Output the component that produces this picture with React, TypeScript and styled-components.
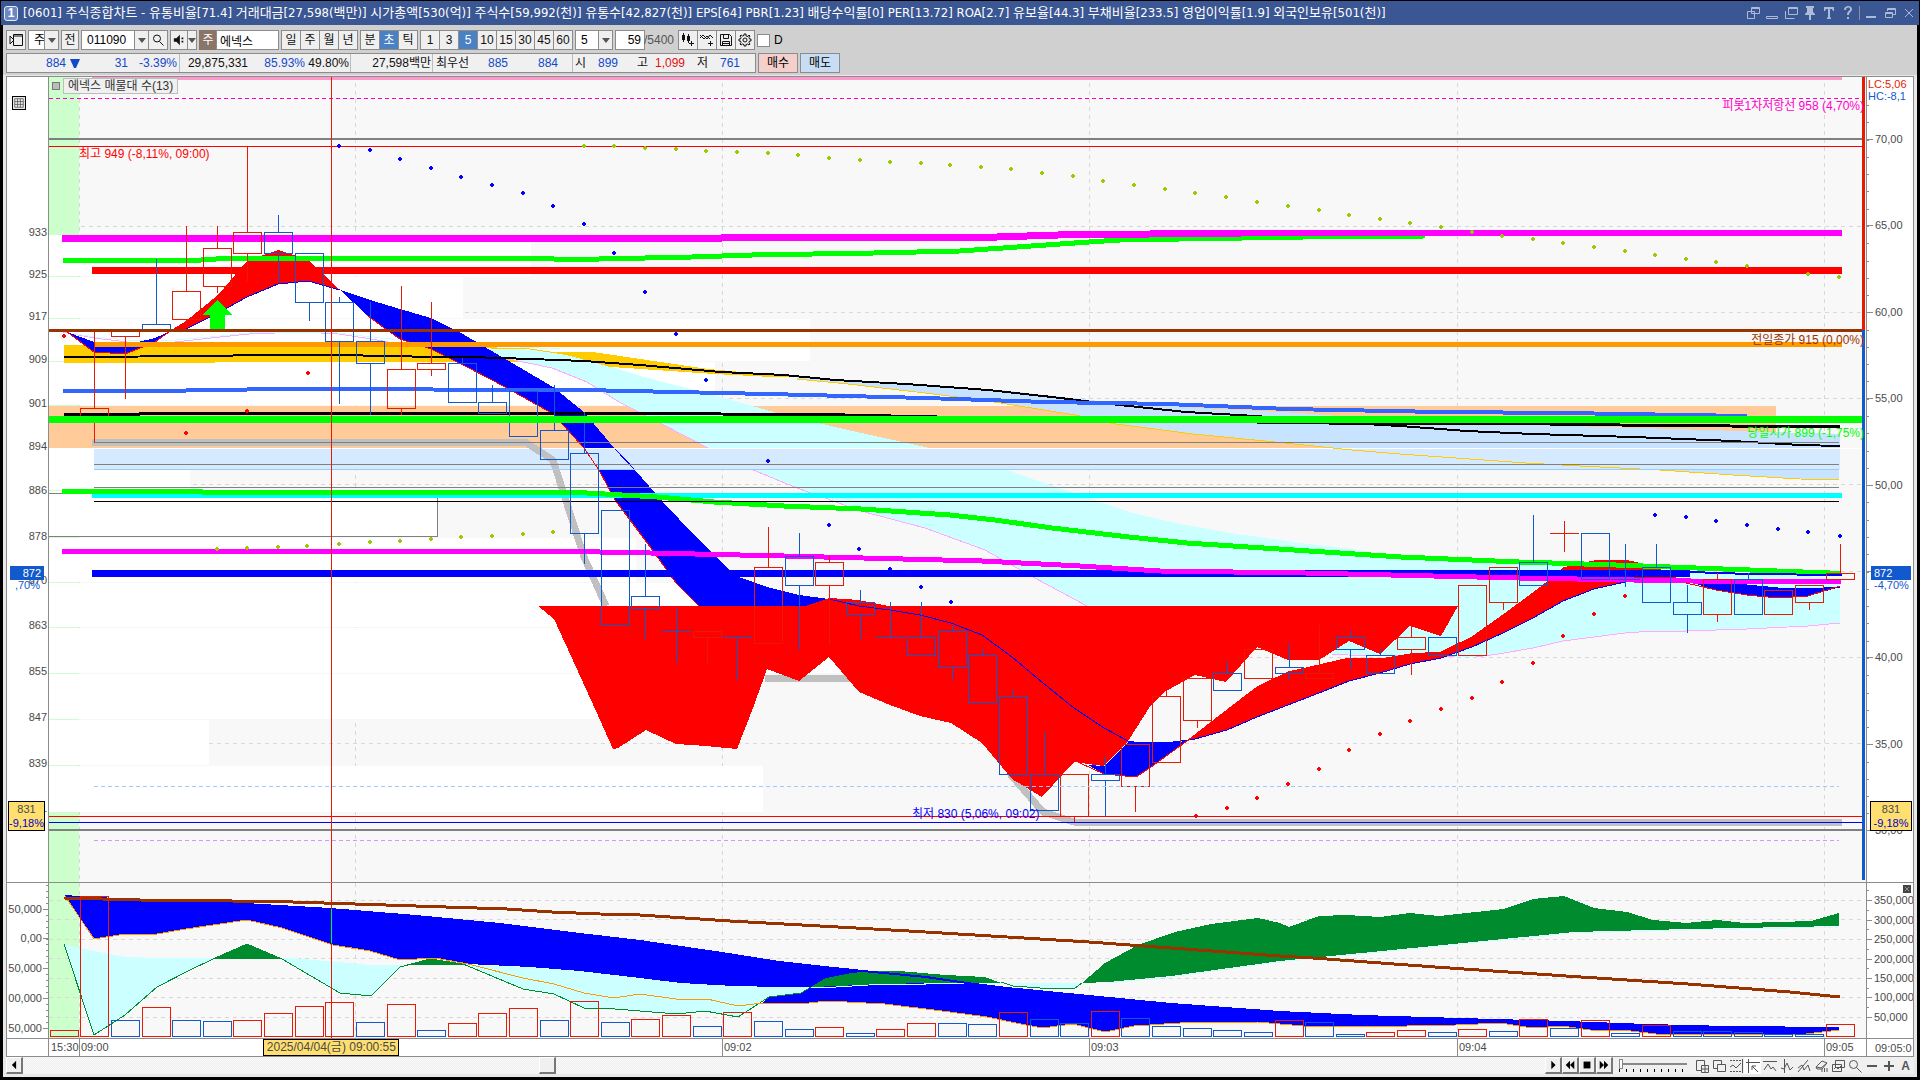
import React from "react";
import styled, { createGlobalStyle, css } from "styled-components";

const KR = `"Liberation Sans", "Noto Sans CJK KR", sans-serif`;
const KR_WIDE = `"DejaVu Sans Condensed", "Noto Sans CJK KR", sans-serif`;

const Global = createGlobalStyle`
  * { box-sizing: border-box; }
  html, body { margin: 0; background: #000; }
  body { font: 12px/14px ${KR}; color: #000; }
  button, input, select { font: inherit; color: inherit; margin: 0; padding: 0; border-radius: 0; }
`;

/* ---------- window ---------- */
const Window = styled.div`
  display: flex;
  flex-direction: column;
  height: 100vh;
  min-height: 640px;
  padding: 1px 1px 3px;
  background: #000;
`;
const TitleBar = styled.header`
  display: flex;
  align-items: center;
  height: 24px;
  flex: none;
  padding: 0 2px 0 3px;
  gap: 5px;
  background: #3a5693;
  color: #fff;
`;
const Badge = styled.span`
  width: 14px;
  height: 15px;
  border: 1px solid #e6ecf8;
  border-radius: 3px;
  background: #6c88c0;
  font-weight: bold;
  line-height: 13px;
  text-align: center;
`;
const Title = styled.h1`
  margin: 0;
  flex: 1;
  font: 13px/20px ${KR_WIDE};
  white-space: pre;
  overflow: hidden;
`;
const TitleTools = styled.div`
  display: flex;
  align-items: center;
  gap: 3px;
  color: #aebbd8;
`;
const TitleButton = styled.button`
  display: grid;
  place-items: center;
  width: 16px;
  height: 20px;
  border: 0;
  background: none;
`;
const TitleRule = styled.i`
  width: 1px;
  height: 14px;
  background: #8a8f9c;
`;
const Body = styled.main`
  display: flex;
  flex-direction: column;
  flex: 1;
  min-height: 0;
  margin: 0 2px;
  background: #e8e8e8;
`;

/* ---------- tool bar ---------- */
const ToolArea = styled.div`
  display: flex;
  flex-direction: column;
  gap: 3px;
  flex: none;
  height: 50px;
  padding: 5px 3px 2px;
  background: #d0d0d0;
`;
const Row = styled.div`
  display: flex;
  height: 20px;
  gap: 2px;
  white-space: nowrap;
`;
const Joined = styled.div`
  display: flex;
  & > * + * { margin-left: -1px; }
`;
const cell = css`
  display: grid;
  place-items: center;
  height: 20px;
  border: 1px solid #8c8c8c;
`;
const ToolButton = styled.button<{ $w?: number; $on?: boolean }>`
  ${cell}
  width: ${(p) => p.$w ?? 20}px;
  background: ${(p) => (p.$on ? "#4a80c4" : "#efefef")};
  color: ${(p) => (p.$on ? "#fff" : "#111")};
`;
const Field = styled.input<{ $w: number; $align?: string }>`
  width: ${(p) => p.$w}px;
  height: 20px;
  padding: 0 3px;
  border: 1px solid #8c8c8c;
  background: #fff;
  text-align: ${(p) => p.$align ?? "left"};
`;
const Pick = styled.select<{ $w: number }>`
  width: ${(p) => p.$w}px;
  height: 20px;
  padding: 0 0 0 5px;
  border: 1px solid #8c8c8c;
  appearance: none;
  background: #fff;
`;
const PickWrap = styled.label`
  position: relative;
  display: block;
  &::after {
    content: "";
    position: absolute;
    right: 1px;
    top: 1px;
    width: 13px;
    height: 18px;
    border-left: 1px solid #8c8c8c;
    background: #efefef;
    pointer-events: none;
  }
  & > svg {
    position: absolute;
    z-index: 1;
    right: 3px;
    top: 8px;
    pointer-events: none;
  }
`;
const StockTag = styled.span`
  display: grid;
  place-items: center;
  width: 18px;
  height: 20px;
  background: #8b7468;
  color: #fff;
`;
const Count = styled.span`
  display: flex;
  align-items: center;
  width: 32px;
  color: #555;
`;
const Check = styled.label`
  display: flex;
  align-items: center;
  gap: 4px;
`;
const CheckBox = styled.input`
  appearance: none;
  width: 13px;
  height: 13px;
  border: 1px solid #8c8c8c;
  background: #fff;
`;
const Quote = styled.div`
  display: flex;
  width: 750px;
  border: 1px solid #8c8c8c;
  background: #f0f0f0;
`;
const QuoteCell = styled.div<{ $w: number }>`
  display: flex;
  align-items: center;
  width: ${(p) => p.$w}px;
  & + & { border-left: 1px solid #bdbdbd; }
`;
const Num = styled.span<{ $w: number; $c?: string }>`
  width: ${(p) => p.$w}px;
  color: ${(p) => p.$c ?? "#111"};
  text-align: right;
`;
const DownMark = styled.span`
  display: grid;
  place-items: center;
  width: 18px;
  color: #1149cc;
`;
const Trade = styled.button<{ $bg: string }>`
  ${cell}
  width: 40px;
  background: ${(p) => p.$bg};
`;

/* ---------- chart ---------- */
const Frame = styled.section`
  display: flex;
  flex-direction: column;
  flex: 1;
  min-height: 0;
  margin: 1px 3px 0;
  border: 1px solid #8c8c8c;
  background: #fff;
`;
const Panel = styled.div<{ $grow?: number; $h?: number }>`
  display: grid;
  grid-template-columns: 41px minmax(0, 1fr) 47px;
  grid-template-rows: minmax(0, 1fr);
  flex: ${(p) => (p.$grow ? `${p.$grow} 1 0` : `0 0 ${p.$h}px`)};
  min-height: 0;
  & + & { border-top: 1px solid #8c8c8c; }
`;
const Axis = styled.div<{ $right?: boolean }>`
  position: relative;
  overflow: hidden;
  color: #4a4a4a;
  font-size: 11px;
  ${(p) => p.$right && "border-left: 1px solid #8c8c8c;"}
`;
const Plot = styled.div<{ $bg?: string }>`
  position: relative;
  display: grid;
  grid-template-rows: minmax(0, 1fr);
  min-height: 0;
  overflow: hidden;
  border-left: 1px solid #8c8c8c;
  background: ${(p) => p.$bg ?? "#f8f8f8"};
`;
const Drawing = styled.svg`
  display: block;
  width: 100%;
  height: 100%;
  min-height: 0;
`;
type At = { $y: number; $left?: string; $right?: string; $c?: string };
const Mark = styled.span<At>`
  position: absolute;
  top: ${(p) => p.$y}%;
  ${(p) => p.$left && `left: ${p.$left};`}
  ${(p) => p.$right && `right: ${p.$right};`}
  color: ${(p) => p.$c ?? "inherit"};
  white-space: pre;
  transform: translateY(-50%);
`;
const Tick = styled.i<{ $y: number; $w: number; $side: string }>`
  position: absolute;
  top: ${(p) => p.$y}%;
  ${(p) => p.$side}: 0;
  width: ${(p) => p.$w}px;
  height: 1px;
  background: #8c8c8c;
`;
const PriceTag = styled(Mark)<{ $w: number; $end?: boolean }>`
  width: ${(p) => p.$w}px;
  padding: 0 3px;
  background: #1159cc;
  color: #fff;
  text-align: ${(p) => (p.$end ? "right" : "left")};
`;
const CursorTag = styled(Mark)<{ $w: number }>`
  width: ${(p) => p.$w}px;
  border: 1px solid #000;
  background: #ffdf6f;
  text-align: center;
  & b { display: block; font-weight: normal; color: #0000c8; }
`;
const Legend = styled.div`
  position: absolute;
  top: 1px;
  left: 3px;
  display: flex;
  align-items: center;
  gap: 3px;
  color: #333;
  &::before {
    content: "";
    width: 6px;
    height: 6px;
    border: 1px solid #777;
    background: #bbb;
  }
  & span {
    padding: 0 4px;
    border: 1px solid #bdbdbd;
    background: #f0f0f0;
  }
`;
const GridButton = styled.button`
  position: absolute;
  top: 19px;
  left: 5px;
  display: grid;
  place-items: center;
  width: 14px;
  height: 14px;
  border: 1px solid #000;
  background: #e8e8e8;
`;
const ClosePanel = styled.button`
  position: absolute;
  top: 2px;
  right: 2px;
  display: grid;
  place-items: center;
  width: 8px;
  height: 8px;
  border: 0;
  background: #444;
  color: #fff;
`;
const TimeMark = styled.span<{ $x: number; $rule?: boolean }>`
  position: absolute;
  top: 0;
  left: ${(p) => p.$x}%;
  height: 17px;
  padding-left: 1px;
  font-size: 11px;
  line-height: 17px;
  color: #4a4a4a;
  ${(p) => p.$rule && "border-left: 1px solid #8c8c8c;"}
`;
const DateTag = styled.span`
  position: absolute;
  top: 0;
  left: 11.8%;
  width: 136px;
  height: 17px;
  border: 1px solid #000;
  background: #ffdf6f;
  color: #4a4a4a;
  line-height: 15px;
  text-align: center;
  white-space: nowrap;
`;

/* ---------- bottom bar ---------- */
const Footer = styled.footer`
  display: flex;
  flex: none;
  height: 17px;
  margin: 0 3px 3px;
`;
const Bevel = styled.button`
  display: grid;
  place-items: center;
  width: 17px;
  height: 17px;
  flex: none;
  border: 1px solid #fff;
  border-right: 2px solid #777;
  border-bottom: 2px solid #777;
  background: #f0f0f0;
`;
const Track = styled.div`
  display: flex;
  flex: 1;
  background: repeating-conic-gradient(#eeeeee 0 25%, #fbfbfb 0 50%) 0 0 / 2px 2px;
`;
const ThumbGap = styled.div`
  flex: 0 0 33.9%;
`;
const Zoomer = styled.label`
  display: grid;
  align-content: start;
  width: 80px;
  padding: 2px 6px 0;
  background: #f0f0f0;
`;
const Range = styled.input`
  appearance: none;
  width: 68px;
  height: 10px;
  background: linear-gradient(#888, #888) 0 4px / 100% 2px no-repeat;
  &::-webkit-slider-thumb {
    appearance: none;
    width: 4px;
    height: 10px;
    border: 1px solid #888;
    background: #fff;
  }
`;
const Notches = styled.i`
  height: 3px;
  background: repeating-linear-gradient(90deg, #000 0 1px, transparent 1px 7px);
`;
const FootTools = styled.div`
  display: flex;
  width: 221px;
  background: #f0f0f0;
`;
const FootButton = styled.button<{ $on?: boolean }>`
  display: grid;
  place-items: center;
  width: 17px;
  height: 17px;
  border: 0;
  background: ${(p) => (p.$on ? "#fff" : "none")};
  color: #555;
`;

/* ---------- data ---------- */
const RED = "#e61a05";
const BLUE = "#1159cc";
const cx = (i: number) => Math.round(63.7 + 30.62 * i);

// [colour, high, body top, body bottom, low], oldest first, as plot heights
type Candle = [string, number, number, number, number];
const r = RED;
const b = BLUE;
const candles: Candle[] = [
  [r, 332, 408, 419, 442], [r, 330, 331, 336, 398], [b, 259, 324, 330, 330], [r, 226, 291, 319, 325],
  [r, 226, 248, 286, 292], [r, 147, 232, 253, 281], [b, 215, 232, 253, 281], [b, 253, 253, 302, 320],
  [b, 297, 302, 341, 403], [b, 302, 341, 363, 414], [r, 286, 369, 408, 414], [r, 302, 363, 369, 375],
  [b, 358, 363, 402, 402], [b, 385, 402, 413, 413], [b, 391, 391, 436, 436], [b, 385, 430, 459, 459],
  [b, 412, 453, 533, 563], [b, 510, 510, 625, 625], [b, 544, 596, 608, 638], [b, 608, 631, 631, 662],
  [r, 631, 631, 637, 662], [b, 637, 637, 637, 679], [r, 527, 567, 643, 643], [b, 533, 556, 585, 649],
  [r, 556, 562, 585, 644], [b, 590, 602, 614, 638], [b, 602, 637, 637, 637], [b, 602, 637, 655, 655],
  [b, 625, 631, 667, 679], [b, 649, 655, 702, 702], [b, 690, 696, 774, 774], [b, 732, 774, 810, 810],
  [r, 774, 774, 816, 822], [b, 756, 774, 780, 816], [r, 744, 744, 786, 811], [r, 691, 696, 762, 762],
  [r, 678, 678, 720, 727], [b, 661, 673, 690, 690], [r, 649, 649, 678, 678], [b, 643, 667, 673, 679],
  [r, 625, 673, 678, 678], [b, 631, 637, 649, 668], [b, 649, 655, 673, 673], [r, 626, 637, 649, 674],
  [b, 637, 637, 655, 655], [r, 585, 585, 655, 655], [r, 567, 567, 602, 609], [b, 515, 562, 585, 585],
  [r, 521, 533, 533, 551], [b, 533, 533, 579, 579], [b, 544, 579, 579, 586], [b, 544, 567, 602, 602],
  [b, 585, 602, 614, 632], [r, 573, 579, 614, 621], [b, 573, 579, 614, 614], [r, 590, 590, 614, 614],
  [r, 585, 585, 602, 609], [r, 544, 573, 579, 579],
];

const volumes: [string, number][] = [
  [r, 1030], [r, 896], [b, 1020], [r, 1007], [b, 1020], [b, 1021], [r, 1020], [r, 1013], [r, 1006], [r, 1002],
  [b, 1022], [r, 1004], [b, 1030], [r, 1023], [r, 1013], [r, 1008], [b, 1020], [r, 1001], [b, 1022], [r, 1019],
  [r, 1015], [b, 1026], [r, 1012], [b, 1021], [b, 1029], [r, 1027], [b, 1033], [r, 1029], [r, 1023], [b, 1023],
  [b, 1024], [r, 1012], [b, 1019], [b, 1023], [r, 1011], [b, 1018], [b, 1026], [b, 1028], [b, 1030], [b, 1032],
  [r, 1020], [b, 1022], [b, 1034], [r, 1032], [r, 1030], [b, 1032], [r, 1029], [b, 1031], [r, 1019], [b, 1028],
  [r, 1020], [b, 1033], [r, 1025], [b, 1031], [b, 1031], [b, 1032], [b, 1034], [b, 1034], [r, 1024],
];

const dots: [string, string][] = [
  ["#0000ff", "339,146 370,150 400,159 431,168 461,177 492,185 523,193 553,206 584,224 614,253 645,292 676,334 706,380 768,461 829,525 859,549 890,569 921,587 951,602 1655,515 1686,517 1716,521 1747,525 1778,529 1808,532 1840,536"],
  ["#99cc00", "584,146 614,146 645,148 676,149 706,151 737,152 768,153 798,155 829,158 860,160 890,162 921,163 950,165 981,167 1011,169 1042,173 1073,176 1103,181 1134,185 1165,189 1195,193 1226,197 1257,202 1288,206 1319,210 1349,215 1380,219 1410,223 1441,227 1472,232 1502,236 1533,239 1563,243 1594,247 1625,251 1655,255 1686,259 1716,262 1747,266 1808,274 1839,277 217,549 247,548 278,547 307,546 339,544 370,542 400,541 431,539 461,537 492,536 523,534 553,532"],
  ["#ff0000", "64,336 308,373 247,411 186,433 1196,816 1227,808 1257,798 1288,784 1319,769 1349,750 1380,734 1410,721 1441,709 1472,698 1502,682 1533,663 1563,636 1594,614 1625,596"],
];

// white bars of the price/volume profile: top, height, right end
const profile: [number, number, number][] = [
  [235, 41, 531], [277, 41, 463], [319, 42, 810], [362, 43, 715], [449, 41, 190], [491, 46, 437],
  [538, 44, 636], [583, 44, 700], [628, 45, 848], [674, 45, 700], [720, 45, 209], [766, 46, 763],
];

const YELLOW = "797,379 848,384 925,393 982,400 1075,415 1116,424 1193,434 1275,442 1352,450 1400,454 1526,463 1580,466 1660,470 1733,475 1800,479 1839,480";
const PINK_R = "1332,654 1348,655 1455,657 1476,657 1498,654 1533,648 1563,641 1594,637 1625,633 1653,631 1686,631 1747,629 1808,626 1840,623";
const PINK_L = "63,332 94,338 127,342 175,342 220,337 249,334 302,332 339,334 371,339 400,344 440,349 504,358 552,368 587,382 619,402 660,423 708,448 746,467 797,488 861,511 925,528 985,550 1033,577 1087,606";
const SLOW_MA = "829,599 859,606 890,610 920,615 951,623 982,635 1012,657 1043,683 1074,708 1104,728 1128,741 1134,742 1166,743 1195,739 1227,730 1257,717 1288,705 1319,693 1349,681 1380,673 1410,664 1441,658 1472,647 1503,633 1533,618 1563,601 1594,589 1625,582 1653,579 1686,581 1716,583 1747,585 1778,588 1808,589 1840,587";
const FAST_MA = "1080,763 1104,774 1136,777 1151,767 1180,746 1187,741 1227,710 1257,687 1288,672 1319,665 1349,658 1380,659 1410,654 1441,652 1472,637 1503,615 1533,593 1551,579 1563,568 1594,561 1625,560 1655,567 1686,583 1716,590 1747,595 1778,598 1808,596 1840,586";
const VOL_SLOW = "65,896 94,898 170,901 245,904 330,909 416,916 500,924 580,934 640,941 722,953 779,962 824,967 873,972 926,977 967,983 1007,988 1089,996 1171,1004 1280,1012 1362,1016 1460,1019 1566,1022 1647,1025 1729,1027 1839,1028";
const VOL_FAST = "762,1003 799,1004 828,1001 885,1004 942,1011 987,1017 1016,1023 1042,1028 1073,1024 1105,1032 1134,1026 1195,1022 1224,1023 1258,1022 1280,1024 1304,1026 1378,1027 1407,1026 1456,1025 1500,1023 1533,1028 1562,1026 1590,1030 1631,1031 1656,1034 1688,1035 1762,1034 1806,1034 1839,1030";
const VOL_GREEN = "64,944 94,1035 125,1015 157,987 190,970 213,959 247,944 282,959 340,993 371,996 400,967 430,959 463,964 523,989 554,994 584,1008 615,1009 640,1011 677,1014 705,1011 738,1017 769,997 801,993 811,987";

const rev = (s: string) => s.split(" ").reverse().join(" ");

type LineProps = { p: string; c: string; w?: number; dash?: string };
const Line = ({ p, c, w = 1, dash }: LineProps) => (
  <polyline points={p} fill="none" stroke={c} strokeWidth={w} strokeDasharray={dash} strokeLinejoin="round" />
);
type LevelProps = { y: number; c: string; w?: number; x1?: number; x2?: number; dash?: string };
const H = ({ y, c, w = 1, x1 = 49, x2 = 1862, dash }: LevelProps) => (
  <line x1={x1} x2={x2} y1={y + (w % 2) / 2} y2={y + (w % 2) / 2} stroke={c} strokeWidth={w} strokeDasharray={dash} />
);
const minutes = [355, 722, 1089, 1457, 1824];

function PriceDrawing() {
  return (
    <Drawing viewBox="49 77 1817 805" preserveAspectRatio="none" shapeRendering="crispEdges" role="img" aria-label="주가 차트">
      {[226, 312, 398, 484, 571, 657, 743].map((y) => <H key={y} y={y} c="#d8d8d8" dash="4 4" />)}
      {[79, ...minutes].map((x) => (
        <line key={x} x1={x + 0.5} x2={x + 0.5} y1={83} y2={882} stroke="#d8d8d8" strokeDasharray="4 4" />
      ))}
      <rect x={49} y={77} width={30} height={158} fill="#ccffcc" />
      <rect x={49} y={812} width={30} height={70} fill="#ccffcc" />
      {profile.map(([y, h, x]) => (
        <g key={y}>
          <rect x={49} y={y} width={x - 49} height={h} fill="#fff" />
          <H y={y + h} c="#ccffcc" x2={79} />
        </g>
      ))}
      <rect x={49} y={406} width={1727} height={42} fill="#ffcc99" />

      {/* long moving-average clouds */}
      <polygon fill="#ffcc00" points="64,345 490,345 536,362 490,362 230,362 200,363 64,363" />
      <polygon fill="#c8e3ff" points={"797,377 960,388 1000,390 1100,401 1200,408 1300,413 1400,421 1640,428 1840,434 " + rev(YELLOW)} />
      <polygon fill="#ccffff" points={"478,347 536,350 568,355 612,367 644,377 721,397 784,415 848,430 925,447 988,463 1027,477 1089,498 1129,512 1180,524 1237,534 1301,543 1352,549 1401,558 1519,564 1723,572 1840,578 " + rev(PINK_R) + " 1087,606 " + rev("504,358 552,368 587,382 619,402 660,423 708,448 746,467 797,488 861,511 925,528 985,550 1033,577")} />
      <polygon fill="#ffcc00" points="555,352 593,352 708,369 797,377 772,377 714,374 612,367" />
      <Line p="440,345 490,348 530,349 570,355 612,367" c="#ffcc00" />
      <Line p={PINK_L} c="#ffaaff" />
      <Line p="70,333 94,337 127,340 175,340 220,336 249,333 330,332 371,337 440,344 500,346 560,349" c="#ccffff" />
      <Line p={PINK_R} c="#ffaaff" />

      {/* short moving-average ribbon, left half */}
      <polygon fill="#ff0000" points="173,329 186,321 218,295 247,261 278,250 308,260 322,273 340,290 308,281 278,284 247,297 218,313 186,329" />
      <polygon fill="#0000ff" points="67,332 94,342 125,345 155,338 169,332 155,342 125,354 94,352" />
      <polygon fill="#0000ff" points="340,290 370,300 400,309 431,318 461,333 502,357 553,387 584,412 615,449 635,470 663,502 696,537 731,571 739,577 767,587 799,595 829,599 806,606 699,606 676,583 651,548 615,500 599,470 584,448 553,414 523,397 492,380 461,364 431,349 400,339 384,328 367,315" />
      <Line p="67,332 94,352 125,354 155,342 173,329" c="#ff0000" />
      <Line p="186,329 218,313 247,297 278,284 308,281 340,290" c="#0000ff" />
      <Line p="367,315 384,328 400,339 431,349 461,364 492,380 523,397 553,414 584,448" c="#ff0000" />

      {/* base band */}
      <rect x={94} y={449} width={1746} height={21} fill="#d6eaff" />
      <H y={448} c="#ffffff" />
      <Line p="584,448 599,470" c="#ff0000" />
      <Line p="615,449 635,470" c="#0000ff" />
      <Line p="599,470 615,500 651,548 676,583 699,606" c="#ff0000" />
      <path d="M49 493.5H94M437.5 498V536.5H49" fill="none" stroke="#808080" />
      <Line p={YELLOW} c="#ffcc00" />

      {/* trailing low */}
      <Line p="92,442 525,442 553,460 584,557 606,606" c="#c0c0c0" w={7} />
      <Line p="765,678 851,678" c="#c0c0c0" w={7} />
      <Line p="1010,774 1043,812 1074,822 1842,822" c="#c0c0c0" w={7} />

      {/* heavy down zone */}
      <polygon fill="#ff0000" points="538,606 554,619 576,667 600,720 613,749 618,748 646,730 676,744 706,746 737,749 753,708 767,669 799,681 829,657 859,692 890,705 920,716 951,723 982,743 1012,779 1042,797 1074,762 1088,764 1104,766 1128,741 1151,705 1166,691 1195,675 1226,682 1257,647 1288,660 1319,660 1349,641 1380,654 1410,626 1441,636 1458,606 888,606 859,600 829,598 806,606" />
      <polygon fill="#0000ff" points="1088,765 1104,766 1128,742 1166,743 1187,741 1151,767 1136,777 1104,774" />
      <polygon fill="#ff0000" points="1187,741 1227,710 1257,687 1288,672 1319,665 1349,658 1380,659 1410,654 1441,652 1472,637 1503,615 1533,593 1551,579 1563,568 1594,561 1625,560 1655,567 1680,580 1653,579 1625,582 1594,589 1563,601 1533,618 1503,633 1472,647 1441,658 1410,664 1380,673 1349,681 1319,693 1288,705 1257,717 1227,730 1195,739" />
      <polygon fill="#0000ff" points="1686,581 1716,583 1747,585 1778,588 1808,589 1840,587 1808,596 1778,598 1747,595 1716,590" />
      <Line p={SLOW_MA} c="#0000ff" />
      <Line p={FAST_MA} c="#ff0000" />

      {/* levels */}
      <H y={77} c="#ff99cc" w={6} x1={92} x2={1842} />
      <H y={98} c="#ff00cc" dash="4 3" />
      <H y={139} c="#808080" w={2} />
      <H y={146} c="#ff0000" />
      <Line p="63,260 201,260 232,258 539,258 568,260 599,259 692,257 752,255 874,253 960,251 1017,247 1089,242 1120,240 1180,239 1304,237 1425,236" c="#00ff00" w={5} />
      <Line p="62,238 722,238 723,237 997,237 1058,235 1242,233 1842,233" c="#ff00ff" w={7} />
      <H y={270} c="#ff0000" w={7} x1={92} x2={1842} />
      <H y={344} c="#ff9900" w={5} x1={94} x2={1842} />
      <Line p="64,357 217,356 250,355 339,355 436,357 469,357 531,359 584,361 640,365 721,372 784,375 835,380 906,384 988,390 1052,397 1110,404 1186,412 1256,416 1330,422 1400,426 1467,431 1533,434 1633,437 1733,441 1800,445 1840,446" c="#000" w={2} />
      <Line p="63,391 156,391 278,389 583,390 676,392 768,394 925,398 1046,402 1167,404 1288,409 1440,412 1563,413 1747,416" c="#3366ff" w={4} />
      <Line p="64,414 140,414 141,413 581,413 721,414 845,415 937,417 1256,422 1400,424 1550,424 1620,425 1730,426 1840,427" c="#000" w={3} />
      <H y={442} c="#808080" x1={94} x2={1839} />
      <H y={464} c="#808080" x1={94} x2={1839} />
      <H y={469} c="#99ccff" x1={94} x2={1839} />
      <H y={487} c="#808080" x1={94} x2={1839} />
      <H y={495} c="#00ffff" w={5} x1={92} x2={1842} />
      <Line p="62,491 201,491 202,492 507,492 587,493 657,497 714,502 784,506 861,509 950,515 995,520 1052,528 1129,537 1187,543 1294,550 1401,557 1519,562 1616,565 1723,569 1830,573 1841,573" c="#00ff00" w={5} />
      <H y={501} c="#000" x1={94} x2={1839} />
      <H y={573} c="#0000ff" w={7} x1={92} x2={1690} />
      <Line p="1690,572 1750,574 1842,575" c="#0000ff" w={2} />
      <Line p="62,551 600,552 650,553 784,556 982,561 1080,566 1160,571 1305,573 1519,578 1691,581 1841,582" c="#ff00ff" w={5} />

      {candles.map(([c, hi, top, bot, lo], k) => {
        const x = cx(k + 1);
        return (
          <g key={k} stroke={c} fill="none">
            <path d={`M${x + 0.5} ${hi}V${top}M${x + 0.5} ${bot}V${lo + 1}`} />
            {top === bot ? <path d={`M${x - 14} ${top + 0.5}h29`} /> : <rect x={x - 13.5} y={top + 0.5} width={28} height={bot - top} />}
          </g>
        );
      })}

      <H y={330} c="#993300" w={3} />
      <H y={419} c="#00ff00" w={7} />
      <polygon fill="#00ff00" points="217,300 232,315 225,315 225,329 210,329 210,315 203,315" />
      <H y={786} c="#99ccff" x1={94} x2={1839} dash="4 3" />
      <H y={816} c="#ff0000" />
      <H y={822} c="#0000ff" />
      <H y={830} c="#808080" w={2} />
      <H y={840} c="#cc99ff" x1={94} x2={1839} dash="4 3" />
      {dots.map(([c, p]) =>
        p.split(" ").map((q) => {
          const [x, y] = q.split(",").map(Number);
          return <path key={c + q} fill={c} d={`M${x - 1} ${y - 2}h2v1h1v2h-1v1h-2v-1h-1v-2h1z`} />;
        })
      )}
      <rect x={1862} y={77} width={3} height={253} fill={RED} />
      <rect x={1862} y={330} width={3} height={550} fill={BLUE} />
      <line x1={331.5} x2={331.5} y1={77} y2={882} stroke="#e61a05" />
    </Drawing>
  );
}

function VolumeDrawing() {
  return (
    <Drawing viewBox="49 883 1817 155" preserveAspectRatio="none" shapeRendering="crispEdges" role="img" aria-label="거래량 차트">
      <rect x={49} y={883} width={30} height={155} fill="#ccffcc" />
      {[900, 919, 939, 958, 978, 997, 1017].map((y) => <H key={y} y={y} c="#d8d8d8" dash="4 4" />)}
      {[79, ...minutes].map((x) => (
        <line key={x} x1={x + 0.5} x2={x + 0.5} y1={883} y2={1038} stroke="#d8d8d8" strokeDasharray="4 4" />
      ))}
      <polygon fill="#ccffff" points={"94,951 125,957 160,958 293,958 350,963 370,965 468,965 530,967 580,971 640,978 681,983 734,986 779,987 811,987 " + rev(VOL_GREEN)} />
      <polygon fill="#ccffff" points="1001,983 1082,983 1075,988 1040,988 1013,986" />
      <polygon fill="#008c2e" points="213,959 247,944 282,959" />
      <polygon fill="#008c2e" points="408,965 430,959 466,965" />
      <polygon fill="#0000ff" points="65,896 94,898 170,901 245,904 330,909 416,916 500,924 580,934 640,941 722,953 779,962 824,967 873,972 926,984 885,984 836,987 779,987 734,986 681,983 640,978 580,971 530,967 468,964 435,958 400,960 370,951 333,945 282,928 247,920 186,929 157,934 125,934 94,939" />
      <polygon fill="#0000ff" points={"769,997 801,993 811,987 836,987 885,984 926,984 967,983 1007,988 1089,996 1171,1004 1280,1012 1362,1016 1460,1019 1566,1022 1647,1025 1729,1027 1839,1028 " + rev(VOL_FAST)} />
      <polygon fill="#008c2e" points="811,987 826,978 852,973 873,971 899,971 946,975 985,977 1001,983 926,983 885,984 836,986" />
      <polygon fill="#008c2e" points="1082,983 1105,963 1138,945 1175,932 1211,924 1258,918 1280,923 1289,927 1319,916 1347,915 1380,917 1410,913 1439,916 1504,909 1533,899 1564,896 1594,908 1627,912 1653,920 1686,923 1717,920 1745,923 1778,922 1811,921 1839,913 1839,926 1688,929 1574,932 1443,945 1280,961 1171,976 1109,982" />
      <Line p="811,987 836,987 885,984 926,984 1001,983" c="#ccffff" />
      <Line p="1109,983 1171,977 1280,962 1443,946 1574,933 1688,930 1839,927" c="#ccffff" />
      <Line p={VOL_SLOW} c="#0000ff" w={2} />
      <Line p={VOL_GREEN} c="#008c2e" />
      <Line p="1001,982 1013,986 1040,988 1075,988 1082,983" c="#008c2e" />
      <Line p="65,896 94,939 125,934 157,934 186,929 247,920 282,928 333,945 370,951 400,960 435,958 468,964 523,978 554,984 584,993 614,998 640,994 676,999 707,999 738,1006" c="#ff9900" />
      <Line p={"738,1006 " + VOL_FAST} c="#ff9900" />
      <Line p="64,898 140,900 232,901 293,902 324,903 386,905 446,907 507,909 552,912 600,914 640,915 730,921 820,926 909,931 991,936 1089,942 1171,948 1280,956 1313,958 1435,967 1566,976 1688,984 1790,992 1840,997" c="#993300" w={3} />
      {volumes.map(([c, y], k) => (
        <rect key={k} x={cx(k) - 13.5} y={y + 0.5} width={28} height={1036 - y} fill="none" stroke={c} />
      ))}
      <line x1={331.5} x2={331.5} y1={883} y2={1038} stroke="#e61a05" />
      <line x1={331.5} x2={331.5} y1={909} y2={943} stroke="#00ff00" />
    </Drawing>
  );
}

const py = (y: number) => ((y - 77) / 805) * 100;
const vy = (y: number) => ((y - 883) / 155) * 100;
const px = (x: number) => ((x - 49) / 1817) * 100;

const Glyph = ({ d, s = 14, fill }: { d: string; s?: number; fill?: boolean }) => (
  <svg width={s} height={s} viewBox="0 0 14 14" fill={fill ? "currentColor" : "none"} stroke={fill ? "none" : "currentColor"} aria-hidden="true">
    <path d={d} />
  </svg>
);
const Arrow = () => (
  <svg width="8" height="5" viewBox="0 0 8 5" aria-hidden="true"><path d="M0 0h8L4 5z" fill="#555" /></svg>
);

const titleIcons: [string, string, boolean?][] = [
  ["창 분리", "M1.5 5.5h7v7h-7zM5.5 1.5h8v6h-8zM5.5 2.5h8"],
  ["내리기", "M1.5 10.5h11v2h-11z"],
  ["복제", "M4.5 1.5h9v7h-9zM4.5 2.5h9M1.5 5v7.5h9"],
  ["고정", "M3 0h8v2h-1v4l2 2v1H8v5H6V9H2V8l2-2V2H3z", true],
  ["글꼴", "M2 1h10v4h-1L10 3H8v8l1 1v1H5v-1l1-1V3H4L3 5H2z", true],
  ["도움말", "M3 4c0-5 8-5 8-1 0 3-3 3-3 6H6c0-4 3-4 3-6 0-2-4-2-4 1zM6 11h2v2H6z", true],
];
const winIcons: [string, string, boolean?][] = [
  ["최소화", "M2 10h10v2H2z", true],
  ["이전 크기", "M2.5 6.5h7v5h-7zM2.5 7.5h7M4.5 5V2.5h8v6H10M4.5 3.5h8"],
  ["닫기", "M3 3l8 8M11 3l-8 8"],
];
const footIcons: [string, string, boolean?, boolean?][] = [
  ["차트 추가", "M6 11.5H1.5v-10h8V6M6.5 6.5h7v7h-7zM6.5 10h7M10 6.5v7"],
  ["차트 겹침", "M5 9.5H1.5v-8h8V5M5.5 5.5h8v7h-8z"],
  ["영역", "M1 1.5h2m1 0h2m1 0h2m1 0h2M1 12.5h2m1 0h2m1 0h2m1 0h2M1 8l3-2 3 3 5-5M13.5 0v14"],
  ["십자선", "M2.5 0v14M0 3.5h14M6 7l6 6M6 7v4M6 7h4", false, true],
  ["수평선", "M0 2.5h14M1 11l4-6 3 5 2-2 3 4"],
  ["수직선", "M4.5 0v14M1 9l3 1 3-6 3 7 3-3"],
  ["추세선", "M1 13L11 1M1 9l4-3 2 5 4-5 2 6"],
  ["전체 지우기", "M2 8l6-6 5 2-5 6H3zM2 8l5 1 6-5M8 13v-3M10.5 13v-4M13 13v-4"],
  ["차트 저장", "M4.5 1.5h9v7h-9zM1.5 5.5h9v7h-9zM3 10l2-2 2 2 3-3"],
  ["돋보기", "M1.5 5.5a4 4 0 1 0 8 0a4 4 0 1 0-8 0M8.5 8.5l5 5"],
  ["축소", "M2 6h10v2H2z", true],
  ["확대", "M2 6h4V2h2v4h4v2H8v4H6V8H2z", true],
];
const playIcons: [string, string][] = [
  ["재생", "M5 2l5 5-5 5z"],
  ["뒤로", "M7 2v10L2 7zM12 2v10L7 7z"],
  ["정지", "M3 3h8v8H3z"],
  ["앞으로", "M2 2l5 5-5 5zM7 2l5 5-5 5z"],
];
const priceScale: [number, number][] = [
  [933, 232], [925, 274], [917, 316], [909, 359], [901, 403], [894, 446], [886, 490],
  [878, 536], [870, 580], [863, 625], [855, 671], [847, 717], [839, 763], [831, 808],
];
const rateScale = ["70,00", "65,00", "60,00", "55,00", "50,00", "45,00", "40,00", "35,00", "30,00"];

export default function App() {
  return (
    <>
      <Global />
      <Window>
        <TitleBar>
          <Badge>1</Badge>
          <Title>[0601] 주식종합차트 - 유통비율[71.4] 거래대금[27,598(백만)] 시가총액[530(억)] 주식수[59,992(천)] 유통수[42,827(천)] EPS[64] PBR[1.23] 배당수익률[0] PER[13.72] ROA[2.7] 유보율[44.3] 부채비율[233.5] 영업이익률[1.9] 외국인보유[501(천)]</Title>
          <TitleTools>
            {titleIcons.map(([n, d, f]) => <TitleButton key={n} aria-label={n}><Glyph d={d} fill={f} /></TitleButton>)}
            <TitleRule />
            {winIcons.map(([n, d, f]) => <TitleButton key={n} aria-label={n}><Glyph d={d} fill={f} /></TitleButton>)}
          </TitleTools>
        </TitleBar>

        <Body>
          <ToolArea>
            <Row>
              <ToolButton aria-label="메뉴"><Glyph d="M4.5 1.5h9v11h-9zM4.5 3h9M1 3v8l4-4z" /></ToolButton>
              <PickWrap><Pick $w={31} aria-label="구분" defaultValue="주"><option>주</option></Pick><Arrow /></PickWrap>
              <ToolButton $w={18}>전</ToolButton>
              <Joined>
                <PickWrap><Pick $w={68} aria-label="종목코드" defaultValue="011090"><option>011090</option></Pick><Arrow /></PickWrap>
                <ToolButton aria-label="종목 검색"><Glyph d="M2.5 5.5a3.5 3.5 0 1 0 7 0a3.5 3.5 0 1 0-7 0M8.5 8.5l4 4" /></ToolButton>
              </Joined>
              <Joined>
                <ToolButton $w={18} aria-label="소리"><Glyph s={12} fill d="M1 5h3l4-4v12L4 9H1zM10 4h2v2h-2zM10 8h2v2h-2z" /></ToolButton>
                <ToolButton $w={10} aria-label="소리 설정"><Arrow /></ToolButton>
              </Joined>
              <Joined>
                <StockTag>주</StockTag>
                <Field $w={63} aria-label="종목명" defaultValue="에넥스" />
              </Joined>
              <Joined>{["일", "주", "월", "년"].map((t) => <ToolButton key={t}>{t}</ToolButton>)}</Joined>
              <Joined>{["분", "초", "틱"].map((t) => <ToolButton key={t} $on={t === "초"}>{t}</ToolButton>)}</Joined>
              <Joined>{["1", "3", "5", "10", "15", "30", "45", "60"].map((t) => <ToolButton key={t} $on={t === "5"}>{t}</ToolButton>)}</Joined>
              <PickWrap><Pick $w={38} aria-label="주기" defaultValue="5"><option>5</option></Pick><Arrow /></PickWrap>
              <Joined>
                <Field $w={30} $align="right" aria-label="봉 개수" defaultValue="59" />
                <Count>/5400</Count>
              </Joined>
              <Joined>
                <ToolButton aria-label="봉 추가"><Glyph fill d="M1 2h1V0h1v2h1v5H3v2H2V7H1zM6 3h1V1h1v2h1v5H8v2H7V8H6zM10 8h1v2h2v1h-2v2h-1v-2H8v-1h2z" /></ToolButton>
                <ToolButton aria-label="지표 추가"><Glyph d="M0 5l3-3 4 4 3-4 3 3M0 2l4 4 3-3 3 3M10.5 8v5M8 10.5h5" /></ToolButton>
                <ToolButton aria-label="저장"><Glyph d="M1.5 1.5h9l2 2v9h-11zM4.5 1.5v4h5v-4M3.5 12.5v-4h7v4M4 10.5h6" /></ToolButton>
                <ToolButton aria-label="설정"><Glyph d="M6 1h2v2l2 .5L11 2l1 1-1 1.5.5 1.5H13v2h-1.5L11 9.5l1 1.5-1 1-1.5-1L8 11.500V13H6v-1.5L4.5 11 3 12l-1-1 1-1.5L2.5 8H1V6h1.5L3 4.5 2 3l1-1 1.5 1L6 2.5zM5 7a2 2 0 1 0 4 0a2 2 0 1 0-4 0" /></ToolButton>
              </Joined>
              <Check><CheckBox type="checkbox" />D</Check>
            </Row>
            <Row>
              <Quote>
                <QuoteCell $w={172}>
                  <Num $w={59} $c="#1149cc">884</Num>
                  <DownMark><svg width="10" height="9" viewBox="0 0 10 9" aria-label="하락"><path d="M0 0h10L6 9H4z" fill="currentColor" /></svg></DownMark>
                  <Num $w={44} $c="#1149cc">31</Num><Num $w={49} $c="#1149cc">-3.39%</Num>
                </QuoteCell>
                <QuoteCell $w={171}>
                  <Num $w={68}>29,875,331</Num><Num $w={57} $c="#1149cc">85.93%</Num><Num $w={44}>49.80%</Num>
                </QuoteCell>
                <QuoteCell $w={82}><Num $w={80}>27,598백만</Num></QuoteCell>
                <QuoteCell $w={140}>
                  <Num $w={36}>최우선</Num><Num $w={39} $c="#1149cc">885</Num><Num $w={50} $c="#1149cc">884</Num>
                </QuoteCell>
                <QuoteCell $w={183}>
                  <Num $w={13}>시</Num><Num $w={32} $c="#1149cc">899</Num><Num $w={30}>고</Num>
                  <Num $w={37} $c="#e01010">1,099</Num><Num $w={23}>저</Num><Num $w={32} $c="#1149cc">761</Num>
                </QuoteCell>
              </Quote>
              <Trade $bg="#f4cfcb">매수</Trade>
              <Trade $bg="#c8ddf3">매도</Trade>
            </Row>
          </ToolArea>

          <Frame>
            <Panel $grow={805}>
              <Axis>
                <GridButton aria-label="데이터 표"><Glyph s={10} d="M1 1h12v12H1zM1 5h12M1 9h12M5 1v12M9 1v12" /></GridButton>
                {priceScale.map(([t, y]) => <Mark key={t} $y={py(y)} $right="1px">{t}</Mark>)}
                <PriceTag $y={py(573)} $left="3px" $w={34} $end>872</PriceTag>
                <Mark $y={py(585)} $right="8px" $c={BLUE}>,70%</Mark>
                <CursorTag $y={py(816)} $left="1px" $w={37}>831<b>-9,18%</b></CursorTag>
              </Axis>
              <Plot>
                <PriceDrawing />
                <Legend><span>에넥스 매물대 수(13)</span></Legend>
                <Mark $y={py(154)} $left={`${px(79)}%`} $c="#ff0000">최고 949 (-8,11%, 09:00)</Mark>
                <Mark $y={py(106)} $right="2px" $c="#ff00cc">피봇1차저항선 958 (4,70%)</Mark>
                <Mark $y={py(340)} $right="2px" $c="#993300">전일종가 915 (0,00%)</Mark>
                <Mark $y={py(433)} $right="2px" $c="#00ff00">당일시가 899 (-1,75%)</Mark>
                <Mark $y={py(814)} $left={`${px(912)}%`} $c="#0000ff">최저 830 (5,06%, 09:02)</Mark>
              </Plot>
              <Axis $right>
                <Mark $y={py(84)} $left="1px" $c="#e61a05">LC:5,06</Mark>
                <Mark $y={py(96)} $left="1px" $c={BLUE}>HC:-8,1</Mark>
                {rateScale.map((t, k) => (
                  <React.Fragment key={t}>
                    <Mark $y={py(139 + 86.4 * k)} $left="8px">{t}</Mark>
                    <Tick $y={py(139 + 86.4 * k)} $w={6} $side="left" />
                  </React.Fragment>
                ))}
                {Array.from({ length: 42 }, (_, k) => <Tick key={k} $y={py(105 + 17.28 * k)} $w={2} $side="left" />)}
                <PriceTag $y={py(573)} $left="4px" $w={40}>872</PriceTag>
                <Mark $y={py(585)} $left="7px" $c={BLUE}>-4,70%</Mark>
                <CursorTag $y={py(816)} $left="3px" $w={42}>831<b>-9,18%</b></CursorTag>
              </Axis>
            </Panel>

            <Panel $grow={155}>
              <Axis>
                {[["50,000", 909], ["0,00", 938], ["50,000", 968], ["00,000", 998], ["50,000", 1028]].map(([t, y]) => (
                  <React.Fragment key={y}>
                    <Mark $y={vy(+y)} $right="6px">{t}</Mark>
                    <Tick $y={vy(+y)} $w={5} $side="right" />
                  </React.Fragment>
                ))}
                {Array.from({ length: 25 }, (_, k) => <Tick key={k} $y={vy(885 + 5.95 * k)} $w={2} $side="right" />)}
              </Axis>
              <Plot><VolumeDrawing /></Plot>
              <Axis $right>
                {["350,000", "300,000", "250,000", "200,000", "150,000", "100,000", "50,000"].map((t, k) => (
                  <React.Fragment key={t}>
                    <Mark $y={vy(900 + 19.5 * k)} $left="7px">{t}</Mark>
                    <Tick $y={vy(900 + 19.5 * k)} $w={5} $side="left" />
                    <Tick $y={vy(890 + 19.5 * k)} $w={2} $side="left" />
                  </React.Fragment>
                ))}
                <ClosePanel aria-label="지표 닫기"><Glyph s={6} d="M2 2l10 10M12 2L2 12" /></ClosePanel>
              </Axis>
            </Panel>

            <Panel $h={18}>
              <Axis />
              <Plot $bg="#fff">
                <TimeMark $x={px(50)}>15:30</TimeMark>
                {[["09:00", 79], ["09:02", 722], ["09:03", 1089], ["09:04", 1457], ["09:05", 1824]].map(([t, x]) => (
                  <TimeMark key={t} $x={px(+x)} $rule>{t}</TimeMark>
                ))}
                <DateTag>2025/04/04(금) 09:00:55</DateTag>
              </Plot>
              <Axis $right><Mark $y={50} $left="8px">09:05:0</Mark></Axis>
            </Panel>
          </Frame>

          <Footer>
            <Bevel aria-label="왼쪽으로"><Glyph s={10} fill d="M10 1v12L4 7z" /></Bevel>
            <Track><ThumbGap /><Bevel aria-label="위치" /></Track>
            {playIcons.map(([n, d]) => <Bevel key={n} aria-label={n}><Glyph s={12} fill d={d} /></Bevel>)}
            <Zoomer><Range type="range" aria-label="확대 비율" defaultValue={0} /><Notches /></Zoomer>
            <FootTools>
              {footIcons.map(([n, d, f, on]) => <FootButton key={n} aria-label={n} $on={on}><Glyph d={d} fill={f} /></FootButton>)}
              <FootButton aria-label="글자"><b>A</b></FootButton>
            </FootTools>
          </Footer>
        </Body>
      </Window>
    </>
  );
}
